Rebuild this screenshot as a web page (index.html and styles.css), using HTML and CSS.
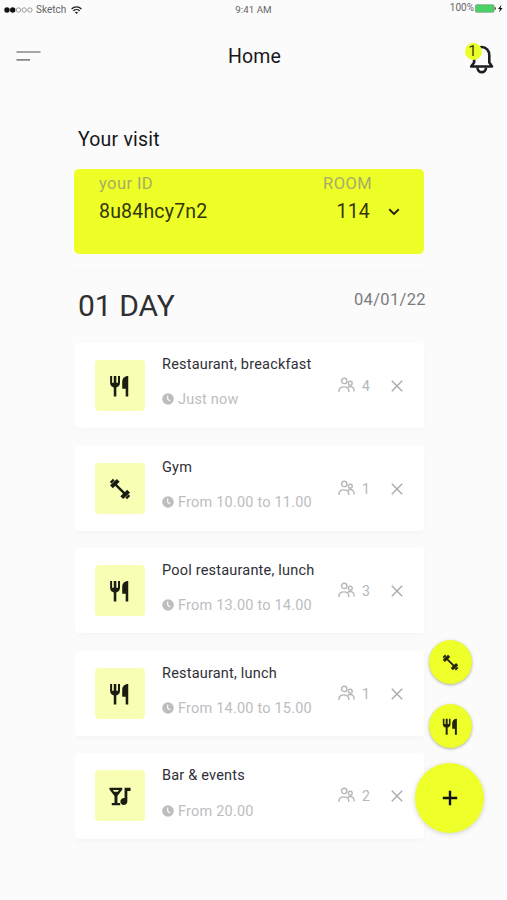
FILE: index.html
```html
<!DOCTYPE html>
<html lang="en">
<head>
<meta charset="utf-8">
<title>Home</title>
<link rel="stylesheet" href="styles.css">
</head>
<body>
<svg class="defs" width="0" height="0" aria-hidden="true">
  <symbol id="food" viewBox="0 0 24 24"><path d="M1.200 1v7.500c0 3 1.800 4.500 4 5V23.500h2.800v-10c2.200-.5 4-2 4-5V1H9.800v7.500H8V1H5.200v7.500H3.400V1zM21 1v22.500h-2.800v-8.500h-3.800V7.500C14.400 3.500 17 1 21 1z" fill="currentColor"/></symbol>
  <symbol id="gym" viewBox="0 0 24 24"><g fill="none" stroke="currentColor"><path d="M5 5l14 14" stroke-width="2.600"/><path d="M2.600 9.600l7.500-7M21.400 14.400l-7.500 7" stroke-width="4.400"/><path d="M1.800 5.200l3.400-3.400M22.200 18.800l-3.400 3.400" stroke-width="2.600"/></g></symbol>
  <symbol id="bar" viewBox="0 0 24 24"><path d="M.5 3h14v2L9.200 12v7.500h3V22H3v-2.500h3V12L.5 5zm3.700 2.500L5.500 7.300h4l1.300-1.800zM17 3h6.500v3.500H20V18a3.800 3.800 0 1 1-3-3.700z" fill="currentColor" fill-rule="evenodd"/></symbol>
  <symbol id="clock" viewBox="0 0 12 12"><circle cx="6" cy="6" r="5.800" fill="currentColor"/><path d="M5.700 2.500v3.800l2.500 1.700" fill="none" stroke="#fff" stroke-width="1.100"/></symbol>
  <symbol id="people" viewBox="0 0 17 16"><g fill="none" stroke="currentColor" stroke-width="1.400"><circle cx="6.200" cy="3.900" r="2.700"/><circle cx="12.300" cy="6.200" r="1.900"/><path d="M1 15v-.8c0-2.700 2-4.300 4.900-4.300s4.900 1.600 4.900 4.300v.8M9.800 10.200c3-1.700 6.200-.2 6.200 3v1.300"/></g></symbol>
  <symbol id="close" viewBox="0 0 12 12"><path d="M.8.8l10.400 10.400M11.200.8L.8 11.200" fill="none" stroke="currentColor" stroke-width="1.400"/></symbol>
</svg>
<div class="screen">
  <div class="status">
    <div class="carrier">
      <svg width="29" height="6" viewBox="0 0 29 6"><g fill="#111"><circle cx="3" cy="3" r="2.700"/><circle cx="8.700" cy="3" r="2.700"/></g><g fill="none" stroke="#777" stroke-width=".7"><circle cx="14.500" cy="3" r="2.200"/><circle cx="20.200" cy="3" r="2.200"/><circle cx="25.900" cy="3" r="2.200"/></g></svg>
      <span>Sketch</span>
      <svg class="wifi" width="11" height="8" viewBox="0 0 11 8"><g fill="none" stroke="#222" stroke-width="1.400"><path d="M.6 3C3.300.2 7.700.2 10.400 3M2.400 4.900c1.700-1.700 4.500-1.700 6.200 0"/></g><path d="M5.500 8L3.900 6.300c.9-.9 2.300-.9 3.200 0z" fill="#222"/></svg>
    </div>
    <div class="clock">9:41 AM</div>
    <div class="power"><span>100%</span>
      <svg width="28" height="9" viewBox="0 0 28 9"><rect x=".5" y=".7" width="18.500" height="7.600" rx="1" fill="#4bd166" stroke="#65906d" stroke-width=".6"/><path d="M19.700 2.800c1.500.3 1.500 3.100 0 3.400z" fill="#222"/><path d="M26.500.8L23 5h2l-1 3.500L27.500 4h-2z" fill="#111"/></svg>
    </div>
  </div>
  <header class="header">
    <svg class="menu" width="26" height="12" viewBox="0 0 26 12"><path d="M.5 2h24M.5 9.800h13.500" stroke="#8a8787" stroke-width="1.700"/></svg>
    <h1>Home</h1>
    <div class="bell">
      <svg width="25" height="30" viewBox="0 0 25 30"><g fill="none" stroke="#1c1c22" stroke-width="2.600"><path d="M2.200 22.500h20.800L20.300 18.500v-7c0-5-3.200-8.500-7.600-8.500s-7.600 3.500-7.600 8.500v7L2.200 22.500z" stroke-linejoin="round"/><path d="M8.500 23.500c0 6.200 8.500 6.200 8.500 0"/></g></svg>
      <span class="badge">1</span>
    </div>
  </header>
  <main class="content">
    <h2>Your visit</h2>
    <section class="visit">
      <div class="guest"><span class="label">your ID</span><span class="value">8u84hcy7n2</span></div>
      <div class="room"><span class="label">ROOM</span><span class="value">114</span></div>
      <svg class="chevron" width="12" height="8" viewBox="0 0 12 8"><path d="M1.200 1.200L6 5.900l4.800-4.700" fill="none" stroke="#252500" stroke-width="1.900"/></svg>
    </section>
    <div class="day"><h3>01 DAY</h3><time>04/01/22</time></div>
    <ul class="list">
      <li class="card"><div class="tile"><svg><use href="#food"/></svg></div><div class="info"><b>Restaurant, breackfast</b><p><svg><use href="#clock"/></svg><span>Just now</span></p></div><div class="count"><svg><use href="#people"/></svg><span>4</span></div><svg class="close"><use href="#close"/></svg></li>
      <li class="card"><div class="tile"><svg><use href="#gym"/></svg></div><div class="info"><b>Gym</b><p><svg><use href="#clock"/></svg><span>From 10.00 to 11.00</span></p></div><div class="count"><svg><use href="#people"/></svg><span>1</span></div><svg class="close"><use href="#close"/></svg></li>
      <li class="card"><div class="tile"><svg><use href="#food"/></svg></div><div class="info"><b>Pool restaurante, lunch</b><p><svg><use href="#clock"/></svg><span>From 13.00 to 14.00</span></p></div><div class="count"><svg><use href="#people"/></svg><span>3</span></div><svg class="close"><use href="#close"/></svg></li>
      <li class="card"><div class="tile"><svg><use href="#food"/></svg></div><div class="info"><b>Restaurant, lunch</b><p><svg><use href="#clock"/></svg><span>From 14.00 to 15.00</span></p></div><div class="count"><svg><use href="#people"/></svg><span>1</span></div><svg class="close"><use href="#close"/></svg></li>
      <li class="card"><div class="tile"><svg><use href="#bar"/></svg></div><div class="info"><b>Bar &amp; events</b><p><svg><use href="#clock"/></svg><span>From 20.00</span></p></div><div class="count"><svg><use href="#people"/></svg><span>2</span></div><svg class="close"><use href="#close"/></svg></li>
    </ul>
  </main>
  <div class="actions">
    <button class="fab" aria-label="Gym"><svg><use href="#gym"/></svg></button>
    <button class="fab" aria-label="Restaurant"><svg><use href="#food"/></svg></button>
    <button class="fab large" aria-label="Add"><svg viewBox="0 0 16 16"><path d="M8 .8v14.400M.8 8h14.400" stroke="#111" stroke-width="2.400"/></svg></button>
  </div>
</div>
</body>
</html>
```
FILE: styles.css
```css
* { box-sizing: border-box; margin: 0; padding: 0; }
body { background: #fbfbfb; font-family: Roboto, "Liberation Sans", sans-serif; color: #17171b; }
svg { display: block; flex: none; }
.defs { position: absolute; }
.screen { position: relative; width: 507px; height: 900px; overflow: hidden; }
.status { display: grid; grid-template-columns: 1fr auto 1fr; height: 20px; padding: 0 4px 0 4px; font-size: 10px; line-height: 20px; color: #666; }
.carrier { display: flex; align-items: center; gap: 3px; font-size: 10px; }
.carrier .wifi { margin-left: 2px; }
.clock { font-size: 9.800px; }
.power { display: flex; justify-content: flex-end; align-items: center; height: 16px; line-height: 16px; gap: 1px; }
.header { display: grid; grid-template-columns: 1fr auto 1fr; align-items: center; height: 72px; padding: 0 13px 0 16px; }
h1 { font-size: 19.500px; font-weight: 400; letter-spacing: .1px; margin-right: 1px; }
.bell { position: relative; justify-self: end; margin-top: 6px; }
.badge { position: absolute; left: -4px; top: -1px; width: 17px; height: 17px; border-radius: 50%; background: #eaff2a; font-size: 15px; line-height: 17px; text-align: center; padding-right: 2px; color: #3a3a10; }
.content { width: 350px; margin-left: 74px; padding-top: 36px; }
h2 { font-size: 19.500px; line-height: 24px; font-weight: 400; letter-spacing: .2px; padding-left: 4px; }
.visit { display: flex; height: 85px; margin-top: 17px; padding: 4px 24px 0 25px; border-radius: 5px; background: #edff27; }
.visit span { display: block; }
.label { font-size: 16.500px; line-height: 21px; letter-spacing: .4px; color: #a8ab65; }
.value { margin-top: 5px; font-size: 19.500px; line-height: 25px; letter-spacing: .2px; color: #333608; }
.guest { flex: 1; }
.room .value { text-align: right; padding-right: 2px; }
.chevron { margin: 35px 0 0 16px; }
.day { display: flex; justify-content: space-between; margin-top: 16px; padding: 16px 0 0 4px; height: 73px; border-top: 1px solid #f6f6f6; }
h3 { font-size: 30px; line-height: 38px; font-weight: 400; color: #303033; }
time { font-size: 16.500px; line-height: 26px; color: #7c7c7f; margin-right: -2px; letter-spacing: .35px; }
.list { list-style: none; display: grid; grid-template-rows: repeat(4, 85px) 86px; gap: 18px; }
.card { display: flex; align-items: flex-start; margin-left: 1px; padding: 17px 21px 0 20px; background: #fff; border-radius: 4px; box-shadow: 0 3px 5px rgba(0,0,0,.025); }
.card:nth-child(n+3) { position: relative; top: -1px; }
.card:last-child { top: -2px; }
.tile { display: grid; place-items: center; width: 50px; height: 51px; border-radius: 4px; background: #f8ffb5; color: #1c1d12; }
.tile svg { width: 22px; height: 22px; }
.info { width: 176px; margin: -4px 0 0 17px; }
.info b { display: block; font-size: 14.500px; line-height: 18px; font-weight: 400; letter-spacing: .2px; color: #2f2f38; white-space: nowrap; }
.info p { display: flex; align-items: center; gap: 4px; margin-top: 17px; font-size: 14.500px; line-height: 18px; letter-spacing: .2px; color: #bdbdbf; }
.info p svg { width: 12px; height: 12px; margin-top: -2px; }
.card:nth-child(n+3) .info { margin-top: -3px; }
.card:last-child .info p { margin-top: 18px; }
.count { display: flex; align-items: center; width: 41px; gap: 7px; height: 20px; margin-top: 16px; color: #b6b6b8; font-size: 14px; }
.count svg { width: 17px; height: 16px; margin-top: -3px; }
.close { width: 12px; height: 12px; margin: 20px 0 0 12px; color: #aaaaad; }
.actions { position: absolute; left: 415px; top: 640px; display: flex; flex-direction: column; align-items: center; }
.fab { display: grid; place-items: center; width: 43px; height: 44px; margin-left: 1px; border: 0; border-radius: 50%; background: #eeff29; color: #24250f; box-shadow: 0 1px 3px rgba(60,60,20,.4); }
.fab svg { width: 17px; height: 17px; }
.fab + .fab { margin-top: 20px; }
.fab.large { width: 69px; height: 70px; margin: 15px 0 0; box-shadow: 0 1px 5px rgba(60,60,20,.22); }
.fab.large svg { width: 16px; height: 16px; }
```
